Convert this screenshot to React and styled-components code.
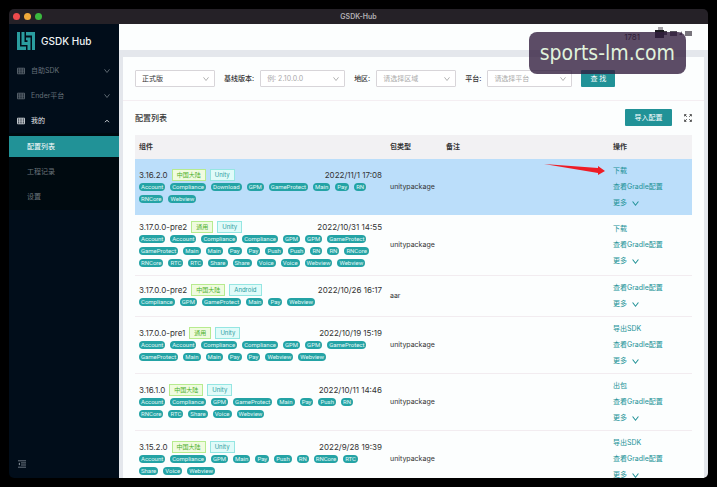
import React, { useState } from "react";
import styled, { createGlobalStyle } from "styled-components";

const GlobalStyle = createGlobalStyle`
  * {
    box-sizing: border-box;
  }
  body {
    margin: 0;
    background: #000;
    color: #333;
    font-family: Inter, "Noto Sans CJK SC", sans-serif;
    font-size: 7px;
    line-height: 12px;
  }
  button, select {
    font: inherit;
  }
  a {
    color: inherit;
    text-decoration: none;
  }
`;

const filters = [
  { id: "channel", options: ["正式版"], filled: true },
  { id: "version", label: "基线版本:", options: ["例: 2.10.0.0"], wide: true },
  { id: "region", label: "地区:", options: ["请选择区域"] },
  { id: "platform", label: "平台:", options: ["请选择平台"], wide: true },
];

const rows = [
  {
    version: "3.16.2.0",
    region: "中国大陆",
    engine: "Unity",
    date: "2022/11/1 17:08",
    modules: [
      ["Account", "Compliance", "Download", "GPM", "GameProtect", "Main", "Pay", "RN"],
      ["RNCore", "Webview"],
    ],
    type: "unitypackage",
    actions: ["下载", "查看Gradle配置"],
    active: true,
  },
  {
    version: "3.17.0.0-pre2",
    region: "通用",
    engine: "Unity",
    date: "2022/10/31 14:55",
    modules: [
      ["Account", "Account", "Compliance", "Compliance", "GPM", "GPM", "GameProtect"],
      ["GameProtect", "Main", "Main", "Pay", "Pay", "Push", "Push", "RN", "RN", "RNCore"],
      ["RNCore", "RTC", "RTC", "Share", "Share", "Voice", "Voice", "Webview", "Webview"],
    ],
    type: "unitypackage",
    actions: ["下载", "查看Gradle配置"],
  },
  {
    version: "3.17.0.0-pre2",
    region: "中国大陆",
    engine: "Android",
    date: "2022/10/26 16:17",
    modules: [["Compliance", "GPM", "GameProtect", "Main", "Pay", "Webview"]],
    type: "aar",
    actions: ["查看Gradle配置"],
  },
  {
    version: "3.17.0.0-pre1",
    region: "通用",
    engine: "Unity",
    date: "2022/10/19 15:19",
    modules: [
      ["Account", "Account", "Compliance", "Compliance", "GPM", "GPM", "GameProtect"],
      ["GameProtect", "Main", "Main", "Pay", "Pay", "Webview", "Webview"],
    ],
    type: "unitypackage",
    actions: ["导出SDK", "查看Gradle配置"],
  },
  {
    version: "3.16.1.0",
    region: "中国大陆",
    engine: "Unity",
    date: "2022/10/11 14:46",
    modules: [
      ["Account", "Compliance", "GPM", "GameProtect", "Main", "Pay", "Push", "RN"],
      ["RNCore", "RTC", "Share", "Voice", "Webview"],
    ],
    type: "unitypackage",
    actions: ["出包", "查看Gradle配置"],
  },
  {
    version: "3.15.2.0",
    region: "中国大陆",
    engine: "Unity",
    date: "2022/9/28 19:39",
    modules: [
      ["Account", "Compliance", "GPM", "Main", "Pay", "Push", "RN", "RNCore", "RTC"],
      ["Share", "Voice", "Webview"],
    ],
    type: "unitypackage",
    actions: ["导出SDK", "查看Gradle配置"],
  },
];

const Chevron = ({ up, size = 6 }) => (
  <svg width={size} height={size} viewBox="0 0 6 6" fill="none" stroke="currentColor" strokeWidth=".9">
    <path d={up ? "M1 4.2 3 2.2l2 2" : "M.5 1.3 3 4.5l2.5-3.2"} />
  </svg>
);

const TableIcon = () => (
  <svg width="8" height="8" viewBox="0 0 8 8" fill="none" stroke="currentColor" strokeWidth=".8">
    <path d="M.5 1.2h7v5.6h-7zM.5 3h7M.5 4.9h7M2.8 1.2v5.6M5.2 1.2v5.6" />
  </svg>
);

const Logo = () => (
  <svg width="18" height="18" viewBox="0 0 18 18" fill="#2a9d9f">
    <path d="M0 0h3v14.5h6V18H0z" />
    <path d="M4.5 0h3v10H12v3H4.5z" />
    <path d="M9 0h9v18h-3V3.5H9z" />
    <path d="M9 5.5h4.5V18h-3V8.2H9z" />
  </svg>
);

const FoldIcon = () => (
  <svg width="8" height="8" viewBox="0 0 8 8" fill="none" stroke="currentColor" strokeWidth=".8">
    <path d="M0 .8h8M3 2.9h5M3 5h5M0 7.2h8" />
    <path d="M2 2.6.4 4 2 5.4z" fill="currentColor" stroke="none" />
  </svg>
);

const ExpandIcon = () => (
  <svg width="8" height="8" viewBox="0 0 8 8" fill="none" stroke="#444" strokeWidth=".9">
    <path d="M.6 2.4V.6h1.8M.6.6l2.2 2.2M5.6.6h1.8v1.8M7.4.6 5.2 2.8M.6 5.6v1.8h1.8M.6 7.4l2.2-2.2M5.6 7.4h1.8V5.6M7.4 7.4 5.2 5.2" />
  </svg>
);

const Avatar = () => (
  <svg width="38" height="12" viewBox="0 0 38 12">
    <path fill="#a5a3a8" d="M3 0h5v3H3z" />
    <path fill="#1c1a20" d="M0 3h9v8H0z" />
    <path fill="#45424a" d="M9 4h3v4H9z" />
    <path fill="#56535c" d="M15 4h7v5h-7z" />
    <path fill="#77747c" d="m24 8 3-4v4zM30 4h7v5h-7z" />
  </svg>
);

const App = () => {
  const [menu, setMenu] = useState("配置列表");
  return (
    <>
      <GlobalStyle />
      <Window>
        <TitleBar>
          <Light $color="#ee4a4c" />
          <Light $color="#f0a93a" />
          <Light $color="#3bb93f" />
          <WindowTitle>GSDK-Hub</WindowTitle>
        </TitleBar>
        <Body>
          <Sidebar>
            <Brand>
              <Logo />
              GSDK Hub
            </Brand>
            <MenuGroup>
              <TableIcon />
              <span>自助SDK</span>
              <Chevron />
            </MenuGroup>
            <MenuGroup>
              <TableIcon />
              <span>Ender平台</span>
              <Chevron />
            </MenuGroup>
            <MenuGroup $open>
              <TableIcon />
              <span>我的</span>
              <Chevron up />
            </MenuGroup>
            <SubMenu>
              {["配置列表", "工程记录", "设置"].map((name) => (
                <SubItem
                  key={name}
                  href="#"
                  $active={menu === name}
                  onClick={() => setMenu(name)}
                >
                  {name}
                </SubItem>
              ))}
            </SubMenu>
            <FoldButton aria-label="fold">
              <FoldIcon />
            </FoldButton>
          </Sidebar>
          <Main>
            <Header>
              <span>1781</span>
              <Avatar />
            </Header>
            <Card>
              <Filters>
                {filters.map(({ id, label, options, filled, wide }) => (
                  <Field key={id}>
                    {label && <label htmlFor={id}>{label}</label>}
                    <SelectBox $wide={wide}>
                      <Select id={id} $filled={filled} aria-label={label || options[0]}>
                        {options.map((option) => (
                          <option key={option}>{option}</option>
                        ))}
                      </Select>
                      <Chevron />
                    </SelectBox>
                  </Field>
                ))}
                <Button>查 找</Button>
              </Filters>
              <Content>
                <ListHead>
                  <h1>配置列表</h1>
                  <Button $wide>导入配置</Button>
                  <IconButton aria-label="fullscreen">
                    <ExpandIcon />
                  </IconButton>
                </ListHead>
                <Table>
                  <thead>
                    <tr>
                      <th className="component">组件</th>
                      <th className="type">包类型</th>
                      <th>备注</th>
                      <th className="action">操作</th>
                    </tr>
                  </thead>
                  <tbody>
                    {rows.map((row, index) => (
                      <Row key={index} $active={row.active}>
                        <ComponentCell>
                          <Summary>
                            <span>{row.version}</span>
                            <Tag $green>{row.region}</Tag>
                            <Tag>{row.engine}</Tag>
                            <time>{row.date}</time>
                          </Summary>
                          {row.modules.map((line, i) => (
                            <Modules key={i}>
                              {line.map((name, j) => (
                                <Pill key={j}>{name}</Pill>
                              ))}
                            </Modules>
                          ))}
                        </ComponentCell>
                        <td>{row.type}</td>
                        <td />
                        <ActionCell>
                          {row.active && (
                            <Arrow width="62" height="14" viewBox="0 0 62 14">
                              <path fill="#ee1c25" d="M0 2 54 6 54 4 61 9 54 13 54 11z" />
                            </Arrow>
                          )}
                          {row.actions.map((action) => (
                            <Action key={action} href="#">
                              {action}
                            </Action>
                          ))}
                          <Action href="#">
                            更多
                            <Chevron size={7} />
                          </Action>
                        </ActionCell>
                      </Row>
                    ))}
                  </tbody>
                </Table>
              </Content>
            </Card>
          </Main>
        </Body>
      </Window>
      <Watermark>sports-lm.com</Watermark>
    </>
  );
};

const Window = styled.div`
  height: calc(100vh - 18px);
  margin: 9px;
  display: flex;
  flex-direction: column;
  overflow: hidden;
  border-radius: 5px;
`;

const TitleBar = styled.header`
  position: relative;
  display: flex;
  flex: none;
  align-items: center;
  gap: 4px;
  height: 15px;
  padding-left: 4px;
  background: #252127;
`;

const Light = styled.i`
  width: 7px;
  height: 7px;
  border-radius: 50%;
  background: ${({ $color }) => $color};
`;

const WindowTitle = styled.strong`
  position: absolute;
  inset: 0;
  color: #b3b0b5;
  font-weight: 600;
  line-height: 15px;
  text-align: center;
`;

const Body = styled.div`
  display: flex;
  flex: 1;
  min-height: 0;
`;

const Sidebar = styled.nav`
  display: flex;
  flex: none;
  flex-direction: column;
  width: 110px;
  background: #010d1a;
`;

const Brand = styled.div`
  display: flex;
  align-items: center;
  gap: 6px;
  height: 34px;
  padding-left: 8px;
  color: #f0f4f6;
  font-size: 10px;
  font-weight: 500;
`;

const MenuGroup = styled.button`
  display: flex;
  align-items: center;
  gap: 6px;
  height: 25px;
  padding: 0 9px 0 8px;
  border: none;
  background: none;
  color: ${({ $open }) => ($open ? "#e6eaed" : "#667079")};
  text-align: left;
  span {
    flex: 1;
  }
`;

const SubMenu = styled.div`
  display: flex;
  flex-direction: column;
  gap: 4px;
  padding: 3px 0;
  background: #000a10;
`;

const SubItem = styled.a`
  padding-left: 18px;
  line-height: 21px;
  background: ${({ $active }) => ($active ? "#219297" : "none")};
  color: ${({ $active }) => ($active ? "#fff" : "#6b747b")};
`;

const FoldButton = styled.button`
  display: flex;
  margin-top: auto;
  padding: 0 9px 10px;
  border: none;
  background: none;
  color: #87919a;
`;

const Main = styled.main`
  flex: 1;
  min-width: 0;
  background: #e4e7ec;
`;

const Header = styled.div`
  display: flex;
  justify-content: flex-end;
  gap: 15px;
  height: 26px;
  padding: 3px 15px 0 0;
  background: #fcfefe;
  color: #111;
  font-size: 8px;
  line-height: 20px;
`;

const Card = styled.section`
  margin: 7px 4px 0;
  background: #fcfefe;
`;

const Filters = styled.form`
  display: flex;
  flex-wrap: wrap;
  gap: 9px;
  padding: 13px 12px;
  border-bottom: 1px solid #f4eef2;
`;

const Field = styled.div`
  display: flex;
  align-items: center;
  gap: 6px;
  label {
    font-weight: 500;
  }
`;

const SelectBox = styled.div`
  position: relative;
  width: ${({ $wide }) => ($wide ? "85px" : "80px")};
  svg {
    position: absolute;
    top: 6px;
    right: 6px;
    color: #aaa;
    pointer-events: none;
  }
`;

const Select = styled.select`
  display: block;
  width: 100%;
  height: 17px;
  padding: 0 6px;
  border: 1px solid #d8d5d9;
  border-radius: 1px;
  appearance: none;
  background: #fff;
  color: ${({ $filled }) => ($filled ? "#333" : "#aaa")};
`;

const Button = styled.button`
  width: ${({ $wide }) => ($wide ? "47px" : "34px")};
  height: 17px;
  padding: 0;
  border: none;
  border-radius: 1px;
  background: #219297;
  color: #fff;
`;

const IconButton = styled.button`
  display: flex;
  padding: 0;
  border: none;
  background: none;
`;

const Content = styled.div`
  padding: 8px 12px;
`;

const ListHead = styled.div`
  display: flex;
  align-items: center;
  gap: 12px;
  margin-bottom: 9px;
  h1 {
    flex: 1;
    margin: 0;
    font-size: 8px;
    font-weight: 500;
  }
`;

const Table = styled.table`
  width: 100%;
  border-spacing: 0;
  table-layout: fixed;
  th {
    height: 24px;
    padding: 0 4px;
    background: #f2f1f3;
    font-weight: 600;
    text-align: left;
  }
  td {
    padding: 4px;
  }
  .component {
    width: 251px;
  }
  .type {
    width: 56px;
  }
  .action {
    width: 83px;
  }
`;

const Row = styled.tr`
  background: ${({ $active }) => ($active ? "#bbdefa" : "none")};
  td {
    border-bottom: ${({ $active }) => ($active ? "none" : "1px solid #f2ecf0")};
  }
`;

const ComponentCell = styled.td`
  && {
    padding: 6px 4px;
  }
`;

const Summary = styled.div`
  display: flex;
  align-items: center;
  gap: 4px;
  font-size: 8px;
  time {
    margin-left: auto;
  }
`;

const Tag = styled.span`
  padding: 0 4px;
  border: 1px solid ${({ $green }) => ($green ? "#b7eb8f" : "#95e6e2")};
  background: ${({ $green }) => ($green ? "#f0fbdf" : "#e0fbf9")};
  color: ${({ $green }) => ($green ? "#4cb02a" : "#2a9d9f")};
  font-size: 6px;
  line-height: 10px;
`;

const Modules = styled.div`
  display: flex;
  gap: 5px;
  padding: 2px 0;
`;

const Pill = styled.span`
  padding: 0 2px;
  border-radius: 4px;
  background: #24a3a5;
  color: #e2f7f6;
  font-family: Roboto, sans-serif;
  font-size: 6px;
  line-height: 8px;
`;

const ActionCell = styled.td`
  position: relative;
`;

const Action = styled.a`
  display: flex;
  align-items: center;
  gap: 5px;
  color: #219297;
  line-height: 16px;
`;

const Arrow = styled.svg`
  position: absolute;
  top: 3px;
  right: calc(100% + 3px);
`;

const Watermark = styled.div`
  position: absolute;
  top: 32px;
  right: 31px;
  padding: 0 11px;
  border-radius: 8px;
  background: rgba(51, 31, 64, 0.8);
  color: #e0f3dc;
  font-family: "DejaVu Sans Condensed", "DejaVu Sans", sans-serif;
  font-size: 21px;
  line-height: 42px;
`;

export default App;
